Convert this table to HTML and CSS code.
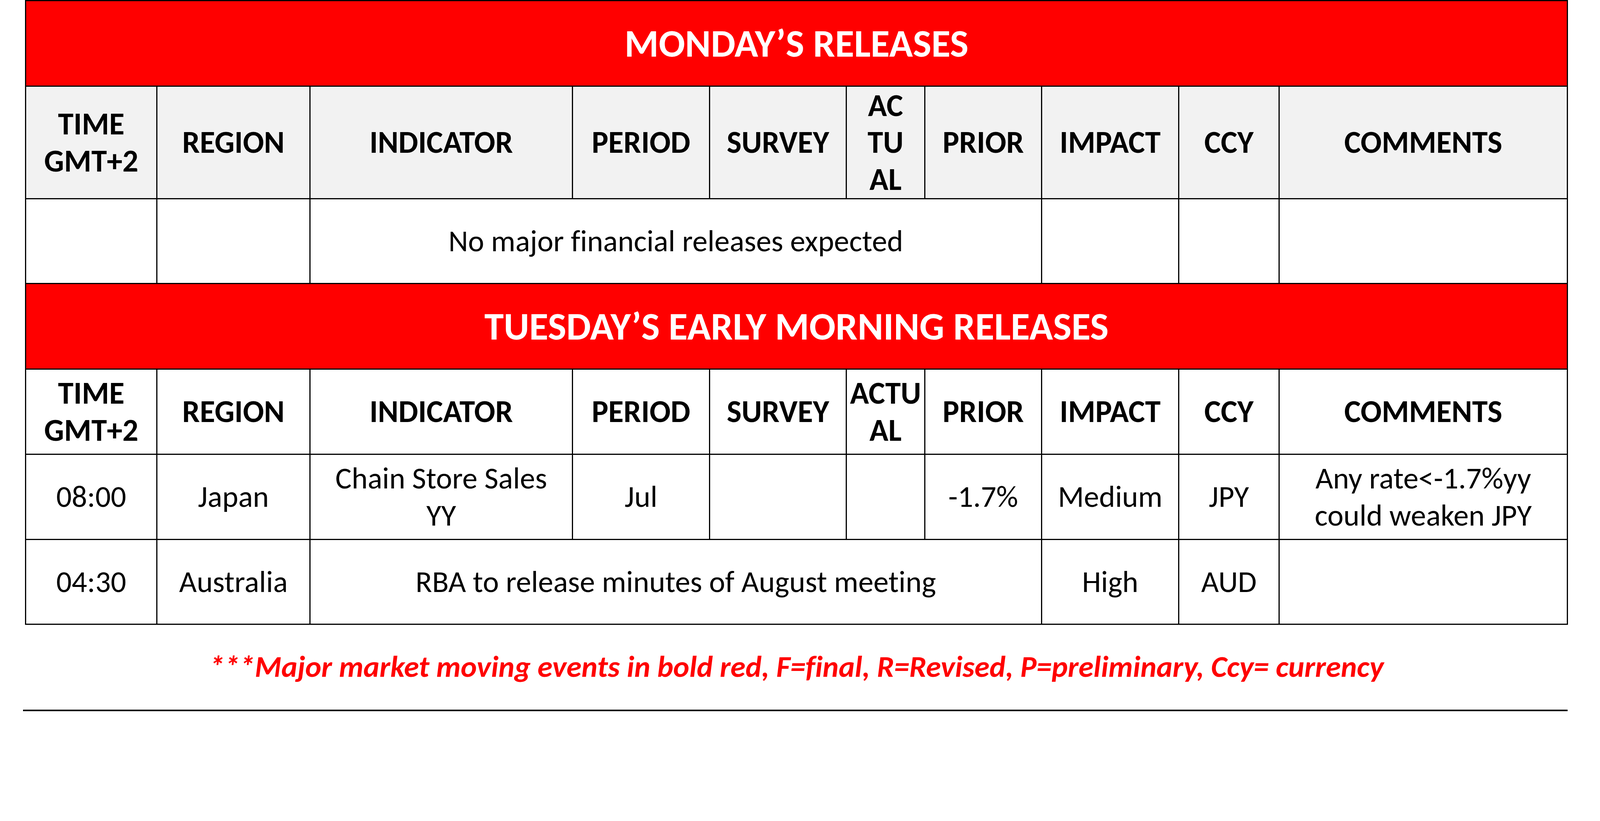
FILE: index.html
```html
<!DOCTYPE html>
<html lang="en">
<head>
<meta charset="utf-8">
<title>Releases</title>
<link rel="stylesheet" href="styles.css">
</head>
<body>
<div class="page">
  <div class="cal">
    <div class="cell title">MONDAY’S RELEASES</div>

    <div class="cell th grey">TIME<br>GMT+2</div>
    <div class="cell th grey">REGION</div>
    <div class="cell th grey">INDICATOR</div>
    <div class="cell th grey">PERIOD</div>
    <div class="cell th grey">SURVEY</div>
    <div class="cell th grey">AC<br>TU<br>AL</div>
    <div class="cell th grey">PRIOR</div>
    <div class="cell th grey">IMPACT</div>
    <div class="cell th grey">CCY</div>
    <div class="cell th grey">COMMENTS</div>

    <div class="cell"></div>
    <div class="cell"></div>
    <div class="cell span5">No major financial releases expected</div>
    <div class="cell"></div>
    <div class="cell"></div>
    <div class="cell"></div>

    <div class="cell title">TUESDAY’S EARLY MORNING RELEASES</div>

    <div class="cell th">TIME<br>GMT+2</div>
    <div class="cell th">REGION</div>
    <div class="cell th">INDICATOR</div>
    <div class="cell th">PERIOD</div>
    <div class="cell th">SURVEY</div>
    <div class="cell th">ACTU<br>AL</div>
    <div class="cell th">PRIOR</div>
    <div class="cell th">IMPACT</div>
    <div class="cell th">CCY</div>
    <div class="cell th">COMMENTS</div>

    <div class="cell">08:00</div>
    <div class="cell">Japan</div>
    <div class="cell">Chain Store Sales<br>YY</div>
    <div class="cell">Jul</div>
    <div class="cell"></div>
    <div class="cell"></div>
    <div class="cell">-1.7%</div>
    <div class="cell">Medium</div>
    <div class="cell">JPY</div>
    <div class="cell">Any rate&lt;-1.7%yy<br>could weaken JPY</div>

    <div class="cell">04:30</div>
    <div class="cell">Australia</div>
    <div class="cell span5">RBA to release minutes of August meeting</div>
    <div class="cell">High</div>
    <div class="cell">AUD</div>
    <div class="cell"></div>
  </div>
  <p class="note">***Major market moving events in bold red, F=final, R=Revised, P=preliminary, Ccy= currency</p>
  <div class="rule"></div>
</div>
</body>
</html>
```
FILE: styles.css
```css
html, body {
  margin: 0;
  padding: 0;
  background: #ffffff;
}
body {
  font-family: Carlito, Calibri, Lato, "Liberation Sans", sans-serif;
  font-variant-ligatures: none;
  color: #000000;
}
.page {
  width: 3950px;
  margin-left: 64px;
}
.cal {
  display: grid;
  grid-template-columns: 333px 389px 669px 348px 347px 198px 296px 348px 254px 735px;
  grid-template-rows: 216px 285px 214px 216px 215px 215px 214px;
  gap: 3px;
  padding: 3px;
  background: #000000;
  width: 3950px;
  box-sizing: border-box;
}
.cell {
  background: #ffffff;
  display: flex;
  align-items: center;
  justify-content: center;
  text-align: center;
  font-size: 78px;
  line-height: 1.21;
  font-weight: 400;
  padding: 0 6px;
}
.th {
  font-size: 80px;
  font-weight: 700;
  line-height: 1.18;
}
.grey {
  background: #f2f2f2;
}
.title {
  grid-column: 1 / -1;
  background: #ff0000;
  color: #ffffff;
  font-weight: 700;
  font-size: 100px;
}
.span5 {
  grid-column: span 5;
}
.note {
  margin: 57px 0 0 0;
  text-align: center;
  color: #ff0000;
  font-weight: 700;
  font-style: italic;
  font-size: 78px;
  line-height: 100px;
}
.rule {
  margin: 60px 0 0 -5px;
  width: 3954px;
  height: 4px;
  background: #000000;
}
```
